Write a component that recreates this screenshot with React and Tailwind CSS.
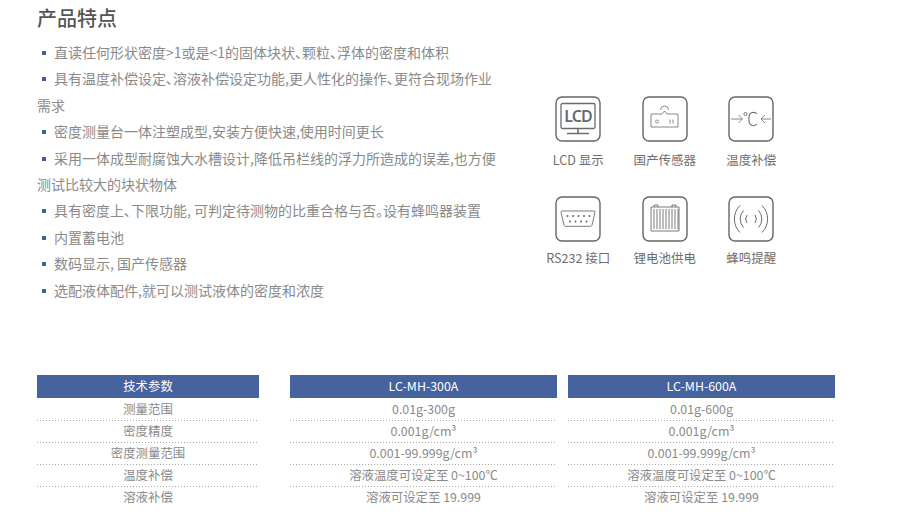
const FONT = "font-['Noto_Sans_CJK_SC','Noto_Sans',sans-serif]";

const features = [
  { t: "直读任何形状密度>1或是<1的固体块状、颗粒、浮体的密度和体积" },
  { t: "具有温度补偿设定、溶液补偿设定功能,更人性化的操作、更符合现场作业", c: "需求" },
  { t: "密度测量台一体注塑成型,安装方便快速,使用时间更长" },
  { t: "采用一体成型耐腐蚀大水槽设计,降低吊栏线的浮力所造成的误差,也方便", c: "测试比较大的块状物体" },
  { t: "具有密度上、下限功能, 可判定待测物的比重合格与否。设有蜂鸣器装置" },
  { t: "内置蓄电池" },
  { t: "数码显示, 国产传感器" },
  { t: "选配液体配件,就可以测试液体的密度和浓度" },
];

const Box = ({ children }) => (
  <svg width="46" height="46" viewBox="0 0 46 46" fill="none" stroke="#6b6b6b" strokeWidth="1">
    <rect x="1" y="1" width="44" height="44" rx="6" stroke="#666" strokeWidth="1.4" />
    {children}
  </svg>
);

const icons = [
  {
    label: "LCD 显示",
    mt: "mt-[6px]",
    svg: (
      <Box>
        <rect x="6" y="7.5" width="34" height="25" rx="1.5" strokeWidth="1.3" />
        <path d="M23 33v4M12 37.5h22" strokeWidth="1.5" />
        <text x="23" y="26" textAnchor="middle" fontSize="16" fontWeight="600" fill="#5f6b78" stroke="none" fontFamily="'Noto Sans',sans-serif" letterSpacing="-1">LCD</text>
      </Box>
    ),
  },
  {
    label: "国产传感器",
    mt: "mt-[6px]",
    svg: (
      <Box>
        <path d="M9 18h11l2.500-3 2.500 3h11v13H9z" strokeWidth=".8" />
        <path d="M18.500 14a4 4 0 0 1 8 0" strokeWidth=".8" />
        <circle cx="15" cy="25.500" r="1.500" strokeWidth=".7" />
        <path d="M28 23.500v4M31 23.500v4" strokeWidth=".8" />
      </Box>
    ),
  },
  {
    label: "温度补偿",
    mt: "mt-[6px]",
    svg: (
      <Box>
        <path d="M3 23h11M10.500 19l4 4-4 4M43 23H33M37 19l-4 4 4 4" strokeWidth=".8" />
        <circle cx="17.500" cy="18" r="1.600" strokeWidth=".9" />
        <path d="M29 18a5 5 0 0 0-3.500-1.700c-3.200 0-4.700 3-4.700 6.700s1.500 6.700 4.700 6.700a5 5 0 0 0 3.500-1.700" strokeWidth="1.100" />
      </Box>
    ),
  },
  {
    label: "RS232 接口",
    mt: "mt-[4px]",
    svg: (
      <Box>
        <path d="M7 15h32a1 1 0 0 1 1 1.200l-3 13a1.500 1.500 0 0 1-1.500 1.100h-25a1.500 1.500 0 0 1-1.500-1.100l-3-13a1 1 0 0 1 1-1.200z" strokeWidth=".9" />
        <g fill="#666" stroke="none">
          {[12.5, 18, 23.5, 29, 34.5].map((x) => <circle key={x} cx={x} cy="20" r="1" />)}
          {[15, 20.5, 26, 31.5].map((x) => <circle key={x} cx={x} cy="25.5" r="1" />)}
        </g>
      </Box>
    ),
  },
  {
    label: "锂电池供电",
    mt: "mt-[4px]",
    svg: (
      <Box>
        <path d="M9 11h28v24H9z" strokeWidth=".9" />
        <path d="M12 11V9h4v2M30 11V9h4v2" strokeWidth=".9" />
        <path d="M12 13v20M15 13v20M18 13v20M21 13v20M24 13v20M27 13v20M30 13v20M33 13v20M36 13v20" strokeWidth=".9" />
      </Box>
    ),
  },
  {
    label: "蜂鸣提醒",
    mt: "mt-[4px]",
    svg: (
      <Box>
        <path d="M19 19a7 7 0 0 0 0 8M27 19a7 7 0 0 1 0 8" strokeWidth="1" />
        <path d="M15.500 14.500a12.500 12.500 0 0 0 0 17M30.500 14.500a12.500 12.500 0 0 1 0 17" strokeWidth="1" />
        <path d="M12 9.500a19 19 0 0 0 0 27M34 9.500a19 19 0 0 1 0 27" strokeWidth="1" />
      </Box>
    ),
  },
];

const cols = [
  {
    w: "w-[222px]",
    head: "技术参数",
    rows: ["测量范围", "密度精度", "密度测量范围", "温度补偿", "溶液补偿"],
  },
  {
    w: "w-[267px] ml-[31px]",
    head: "LC-MH-300A",
    rows: ["0.01g-300g", "0.001g/cm³", "0.001-99.999g/cm³", "溶液温度可设定至 0~100℃", "溶液可设定至 19.999"],
  },
  {
    w: "w-[267px] ml-[11px]",
    head: "LC-MH-600A",
    rows: ["0.01g-600g", "0.001g/cm³", "0.001-99.999g/cm³", "溶液温度可设定至 0~100℃", "溶液可设定至 19.999"],
  },
];

export default function App() {
  return (
    <div className={`${FONT} w-[900px] h-[529px] overflow-hidden bg-white pl-[37px] text-[#8a8a8a]`}>
      <h2 className="h-[39px] pt-[3px] text-[20px] leading-[30px] font-medium text-[#555555]">产品特点</h2>
      <div className="flex h-[336px]">
        <ul className="w-[470px] text-[14px] leading-[26.4px] [font-feature-settings:'palt']">
          {features.map((f) => (
            <li key={f.t}>
              <span className="inline-block w-[4px] h-[4px] bg-[#3f5f9e] ml-[5px] mr-[8px] align-[3px]" />
              {f.t}
              {f.c && <div>{f.c}</div>}
            </li>
          ))}
        </ul>
        <div className="ml-[28px] mt-[57px] grid grid-cols-[86.5px_86.5px_86.5px] auto-rows-[100px] content-start">
          {icons.map((i) => (
            <div key={i.label} className="flex flex-col items-center">
              <div className="h-[46px]">{i.svg}</div>
              <div className={`${i.mt} whitespace-nowrap text-[12.5px] leading-[24px] text-[#6e6e6e]`}>{i.label}</div>
            </div>
          ))}
        </div>
      </div>
      <div className="flex text-[12.4px]">
        {cols.map((c) => (
          <div key={c.head} className={c.w}>
            <div className="h-[22.5px] bg-[#46639f] text-center leading-[23px] text-white">{c.head}</div>
            {c.rows.map((r, i) => (
              <div key={i} className="h-[22.1px] flex flex-col">
                <div className="h-[22px] shrink-0 text-center leading-[22px] whitespace-nowrap text-[#8a8a8a]">{r}</div>
                {i < 4 && <div className="h-[1px] shrink-0 bg-[repeating-linear-gradient(90deg,#a8a8a8_0_1px,transparent_1px_3px)]" />}
              </div>
            ))}
          </div>
        ))}
      </div>
    </div>
  );
}
